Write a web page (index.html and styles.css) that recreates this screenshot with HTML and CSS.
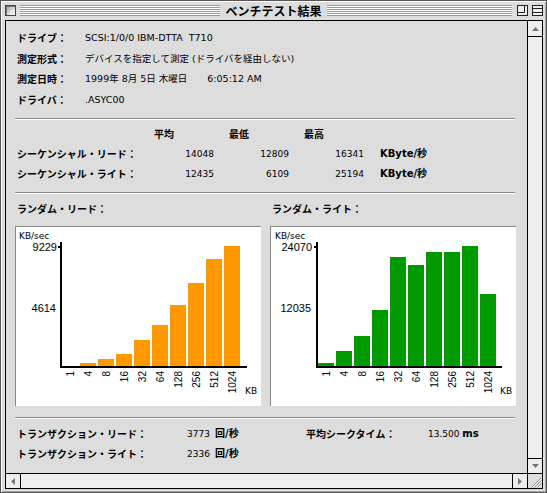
FILE: index.html
```html
<!DOCTYPE html>
<html lang="ja">
<head>
<meta charset="utf-8">
<title>ベンチテスト結果</title>
<link rel="stylesheet" href="styles.css">
</head>
<body>
<div class="window">
  <div class="titlebar">
    <div class="tb-left">
      <span class="closebox"></span>
      <span class="stripes"></span>
    </div>
    <div class="title">ベンチテスト結果</div>
    <div class="tb-right">
      <span class="stripes"></span>
      <span class="tbox">
        <svg width="11" height="11" viewBox="0 0 11 11"><rect x="0.5" y="0.5" width="10" height="10" fill="#eee" stroke="#222"/><path d="M0.5 7.5 H7.5 V0.5" fill="none" stroke="#222"/></svg>
      </span>
      <span class="tbox">
        <svg width="11" height="11" viewBox="0 0 11 11"><rect x="0.5" y="0.5" width="10" height="10" fill="#eee" stroke="#222"/><path d="M0.5 3.5 H10.5 M0.5 7.5 H10.5" fill="none" stroke="#222"/></svg>
      </span>
    </div>
  </div>

  <div class="pane">
    <div class="content">
      <div class="info">
        <div class="row"><span class="lbl">ドライブ：</span><span class="val">SCSI:1/0/0 IBM-DTTA  T710</span></div>
        <div class="row"><span class="lbl">測定形式：</span><span class="val">デバイスを指定して測定 (ドライバを経由しない)</span></div>
        <div class="row"><span class="lbl">測定日時：</span><span class="val">1999年 8月 5日 木曜日<span class="gap"></span>6:05:12 AM</span></div>
        <div class="row"><span class="lbl">ドライバ：</span><span class="val">.ASYC00</span></div>
      </div>

      <div class="sep"></div>

      <div class="seq">
        <span></span>
        <span class="hdr">平均</span>
        <span class="hdr">最低</span>
        <span class="hdr">最高</span>
        <span></span>

        <span class="lbl first">シーケンシャル・リード：</span>
        <span class="num">14048</span>
        <span class="num">12809</span>
        <span class="num">16341</span>
        <span class="unit">KByte/秒</span>

        <span class="lbl first">シーケンシャル・ライト：</span>
        <span class="num">12435</span>
        <span class="num">6109</span>
        <span class="num">25194</span>
        <span class="unit">KByte/秒</span>
      </div>

      <div class="sep"></div>

      <div class="random">
        <div class="rcol">
          <div class="rhead">ランダム・リード：</div>
          <div class="chart">
            <svg width="245" height="179" viewBox="0 0 245 179">
              <text class="unitlbl" x="3" y="12">KB/sec</text>
              <text class="ylbl" x="41" y="24" text-anchor="end">9229</text>
              <text class="ylbl" x="40" y="85" text-anchor="end">4614</text>
              <rect x="42" y="19" width="2" height="2" fill="#000"/>
              <g fill="#ff9900">
                <rect x="64" y="136" width="16" height="3"/>
                <rect x="82" y="132" width="16" height="7"/>
                <rect x="100" y="127" width="16" height="12"/>
                <rect x="118" y="113" width="16" height="26"/>
                <rect x="136" y="98" width="16" height="41"/>
                <rect x="154" y="78" width="16" height="61"/>
                <rect x="172" y="56" width="16" height="83"/>
                <rect x="190" y="32" width="16" height="107"/>
                <rect x="208" y="19" width="16" height="120"/>
              </g>
              <rect x="44" y="15" width="2" height="126" fill="#000"/>
              <rect x="44" y="139" width="187" height="2" fill="#000"/>
              <g class="xlbl" text-anchor="end">
                <text transform="translate(57.5 144) rotate(-90)">1</text>
                <text transform="translate(75.5 144) rotate(-90)">4</text>
                <text transform="translate(93.5 144) rotate(-90)">8</text>
                <text transform="translate(111.5 144) rotate(-90)">16</text>
                <text transform="translate(129.5 144) rotate(-90)">32</text>
                <text transform="translate(147.5 144) rotate(-90)">64</text>
                <text transform="translate(165.5 144) rotate(-90)">128</text>
                <text transform="translate(183.5 144) rotate(-90)">256</text>
                <text transform="translate(201.5 144) rotate(-90)">512</text>
                <text transform="translate(219.5 144) rotate(-90)">1024</text>
              </g>
              <text class="unitlbl" x="229" y="167">KB</text>
            </svg>
          </div>
        </div>
        <div class="rcol">
          <div class="rhead">ランダム・ライト：</div>
          <div class="chart">
            <svg width="245" height="179" viewBox="0 0 245 179">
              <text class="unitlbl" x="4" y="12">KB/sec</text>
              <text class="ylbl" x="41" y="24" text-anchor="end">24070</text>
              <text class="ylbl" x="40" y="85" text-anchor="end">12035</text>
              <rect x="43" y="19" width="2" height="2" fill="#000"/>
              <g fill="#009900">
                <rect x="47" y="136" width="16" height="3"/>
                <rect x="65" y="124" width="16" height="15"/>
                <rect x="83" y="109" width="16" height="30"/>
                <rect x="101" y="83" width="16" height="56"/>
                <rect x="119" y="30" width="16" height="109"/>
                <rect x="137" y="38" width="16" height="101"/>
                <rect x="155" y="25" width="16" height="114"/>
                <rect x="173" y="25" width="16" height="114"/>
                <rect x="191" y="19" width="16" height="120"/>
                <rect x="209" y="67" width="16" height="72"/>
              </g>
              <rect x="45" y="15" width="2" height="126" fill="#000"/>
              <rect x="45" y="139" width="186" height="2" fill="#000"/>
              <g class="xlbl" text-anchor="end">
                <text transform="translate(58.5 144) rotate(-90)">1</text>
                <text transform="translate(76.5 144) rotate(-90)">4</text>
                <text transform="translate(94.5 144) rotate(-90)">8</text>
                <text transform="translate(112.5 144) rotate(-90)">16</text>
                <text transform="translate(130.5 144) rotate(-90)">32</text>
                <text transform="translate(148.5 144) rotate(-90)">64</text>
                <text transform="translate(166.5 144) rotate(-90)">128</text>
                <text transform="translate(184.5 144) rotate(-90)">256</text>
                <text transform="translate(202.5 144) rotate(-90)">512</text>
                <text transform="translate(220.5 144) rotate(-90)">1024</text>
              </g>
              <text class="unitlbl" x="229" y="167">KB</text>
            </svg>
          </div>
        </div>
      </div>

      <div class="sep sep-low"></div>

      <div class="trans">
        <span class="lbl first">トランザクション・リード：</span>
        <span class="num">3773</span>
        <span class="unit small">回/秒</span>
        <span class="lbl first">平均シークタイム：</span>
        <span class="num2">13.500 <b class="ms">ms</b></span>

        <span class="lbl first">トランザクション・ライト：</span>
        <span class="num">2336</span>
        <span class="unit small">回/秒</span>
        <span></span>
        <span></span>
      </div>
    </div>

    <div class="vscroll">
      <div class="vbtn up"><svg width="7" height="4" viewBox="0 0 7 4"><path d="M3.5 0 L7 4 H0 Z" fill="#777"/></svg></div>
      <div class="vbtn down"><svg width="7" height="4" viewBox="0 0 7 4"><path d="M0 0 H7 L3.5 4 Z" fill="#777"/></svg></div>
    </div>
    <div class="hscroll">
      <div class="hbtn left"><svg width="4" height="7" viewBox="0 0 4 7"><path d="M4 0 V7 L0 3.5 Z" fill="#777"/></svg></div>
      <div class="hbtn right"><svg width="4" height="7" viewBox="0 0 4 7"><path d="M0 0 L4 3.5 L0 7 Z" fill="#777"/></svg></div>
    </div>
    <div class="grow">
      <svg width="14" height="14" viewBox="0 0 14 14">
        <path d="M3.5 13.5 L13.5 3.5 M6.5 13.5 L13.5 6.5 M9.5 13.5 L13.5 9.5" stroke="#888" stroke-width="1" fill="none"/>
        <path d="M4.5 13.5 L13.5 4.5 M7.5 13.5 L13.5 7.5 M10.5 13.5 L13.5 10.5" stroke="#fff" stroke-width="1" fill="none"/>
      </svg>
    </div>
  </div>
</div>
</body>
</html>
```

FILE: styles.css
```css
* { box-sizing: border-box; }
html, body { margin: 0; padding: 0; }
body {
  width: 547px;
  height: 493px;
  overflow: hidden;
  background: #dddddd;
  color: #000;
  font-family: "DejaVu Sans", "Noto Sans CJK JP", sans-serif;
}

.window {
  width: 547px;
  height: 493px;
  border: 1px solid #555;
  background: #dddddd;
  box-shadow: inset 1px 1px 0 #fff, inset -1px -1px 0 #aaa;
  display: flex;
  flex-direction: column;
}

/* title bar */
.titlebar {
  height: 19px;
  flex: none;
  display: grid;
  grid-template-columns: 1fr auto 1fr;
  column-gap: 5px;
}
.tb-left, .tb-right {
  display: flex;
  gap: 4px;
  padding-top: 4px;
}
.tb-left { padding-left: 4px; }
.tb-right { padding-right: 3px; }
.tb-right .stripes { margin-right: 1px; }
.closebox {
  width: 11px;
  height: 11px;
  flex: none;
  border: 1px solid #444;
  background: linear-gradient(135deg, #999 0%, #ddd 55%, #fff 100%);
  box-shadow: inset 1px 1px 0 #777;
}
.stripes {
  flex: 1;
  height: 11px;
  background: repeating-linear-gradient(to bottom, #999 0 1px, #fff 1px 2px);
}
.tbox { width: 11px; height: 11px; flex: none; display: block; }
.tbox svg { display: block; }
.title {
  font: bold 12px/19px "Noto Sans CJK JP", sans-serif;
  white-space: nowrap;
}

/* pane */
.pane {
  flex: none;
  margin: 0 3px 3px 4px;
  border: 1px solid #000;
  display: grid;
  grid-template-columns: 521px 15px;
  grid-template-rows: 452px 15px;
}
.content {
  background: #dddddd;
  padding: 7px 11px 0 9px;
  overflow: hidden;
}

.lbl {
  font: bold 10px/20px "Noto Sans CJK JP", sans-serif;
  white-space: nowrap;
}
.val {
  font: 9.5px/20px "DejaVu Sans", "Noto Sans CJK JP", sans-serif;
  white-space: pre;
}
.gap { display: inline-block; width: 20px; }

.info .row {
  display: flex;
  align-items: center;
  height: 20.5px;
  padding-left: 2px;
}
.info .lbl { width: 68px; flex: none; }

.sep {
  height: 2px;
  border-top: 1px solid #888;
  border-bottom: 1px solid #fff;
  margin-top: 8px;
  width: 500px;
}

.seq {
  margin-top: 4px;
  display: grid;
  grid-template-columns: 124px 75px 75px 75px auto;
  grid-auto-rows: 20px;
  align-items: center;
}
.first { padding-left: 2px; }
.hdr {
  font: bold 10px/20px "Noto Sans CJK JP", sans-serif;
  padding-left: 15px;
}
.num {
  font: 9px/20px "DejaVu Sans", sans-serif;
  text-align: right;
}
.unit {
  font: bold 10px/20px "DejaVu Sans", "Noto Sans CJK JP", sans-serif;
  padding-left: 16px;
  white-space: nowrap;
}
.unit.small { padding-left: 5px; }

.random {
  margin-top: 5px;
  display: grid;
  grid-template-columns: 246px 246px;
  column-gap: 9px;
}
.rhead {
  font: bold 10px/20px "Noto Sans CJK JP", sans-serif;
  padding-left: 2px;
  margin-bottom: 7px;
}
.chart {
  height: 180px;
  background: #fff;
  border-top: 1px solid #888;
  border-left: 1px solid #888;
}
.chart svg { display: block; }
.unitlbl { font: 9px "DejaVu Sans", sans-serif; fill: #000; }
.ylbl { font: 11px "Liberation Sans", sans-serif; fill: #000; }
.xlbl { font: 10px "Liberation Sans", sans-serif; fill: #000; }

.sep-low { margin-top: 11px; }

.trans {
  margin-top: 5px;
  display: grid;
  grid-template-columns: 153px 42px 94px 124px auto;
  grid-auto-rows: 20px;
  align-items: center;
}
.num2 {
  font: 9px/20px "DejaVu Sans", sans-serif;
  white-space: pre;
}
.ms { font: bold 10px "DejaVu Sans", sans-serif; }

/* scrollbars */
.vscroll {
  border-left: 1px solid #000;
  background: #eeeeee;
  display: flex;
  flex-direction: column;
  justify-content: space-between;
}
.vbtn {
  display: flex;
  align-items: center;
  justify-content: center;
  background: #eeeeee;
}
.vbtn svg { display: block; }
.vbtn.up { height: 16px; border-bottom: 1px solid #000; }
.vbtn.down { height: 15px; border-top: 1px solid #000; }

.hscroll {
  border-top: 1px solid #000;
  background: #eeeeee;
  display: flex;
  justify-content: space-between;
}
.hbtn {
  width: 15px;
  display: flex;
  align-items: center;
  justify-content: center;
}
.hbtn svg { display: block; }
.hbtn.left { border-right: 1px solid #000; }
.hbtn.right { border-left: 1px solid #000; }

.grow {
  border-left: 1px solid #000;
  border-top: 1px solid #000;
  background: #dddddd;
}
.grow svg { display: block; }
```
